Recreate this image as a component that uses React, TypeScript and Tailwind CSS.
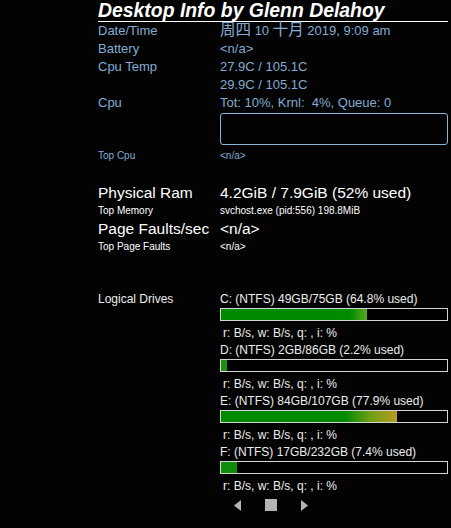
const blue = "text-[#82acd2]";

type Drive = {
  title: string;
  pct: number;
  grad: string;
};

const drives: Drive[] = [
  { title: "C: (NTFS) 49GB/75GB (64.8% used)", pct: 64.8, grad: "linear-gradient(to right, #008a00 0%, #008a00 88%, #5aa81c 100%)" },
  { title: "D: (NTFS) 2GB/86GB (2.2% used)", pct: 2.6, grad: "#1f8f12" },
  { title: "E: (NTFS) 84GB/107GB (77.9% used)", pct: 77.9, grad: "linear-gradient(to right, #008a00 0%, #008a00 70%, #6fa016 85%, #b89a22 100%)" },
  { title: "F: (NTFS) 17GB/232GB (7.4% used)", pct: 7.2, grad: "#0f8c0a" },
];

function Row({ label, children, className = "" }: { label: string; children?: React.ReactNode; className?: string }) {
  return (
    <div className={`grid grid-cols-[122px_1fr] ${className}`}>
      <div className="whitespace-nowrap">{label}</div>
      <div className="whitespace-pre">{children}</div>
    </div>
  );
}

function DriveBlock({ d }: { d: Drive }) {
  return (
    <div>
      <div className="h-[17px] leading-[17px] whitespace-nowrap">{d.title}</div>
      <div className="h-[13px] w-[228px] border border-[#d4d4d4] bg-black">
        <div className="h-full" style={{ width: `${d.pct}%`, background: d.grad }} />
      </div>
      <div className="pt-[4px] h-[21px] leading-[17px] pl-[3px] whitespace-pre">r: B/s, w: B/s, q: , i: %</div>
    </div>
  );
}

export default function App() {
  return (
    <div className="w-[451px] h-[528px] overflow-hidden bg-[#030303] pl-[98px] pr-[3px] font-['Liberation_Sans',Arial,'Noto_Sans_CJK_SC',sans-serif] text-[#ececec]">
      <div className="h-[22px] border-b border-white text-[19.4px] leading-[21px] font-bold italic text-white whitespace-nowrap">
        Desktop Info by Glenn Delahoy
      </div>

      <div className={`text-[13px] leading-[18px] ${blue}`}>
        <Row label="Date/Time" className="h-[18px]">
          <span className="text-[15.5px] leading-[0]">周四</span> 10 <span className="text-[15.5px] leading-[0]">十月</span> 2019, 9:09 am
        </Row>
        <Row label="Battery">{"<n/a>"}</Row>
        <Row label="Cpu Temp">27.9C / 105.1C</Row>
        <Row label="">29.9C / 105.1C</Row>
        <Row label="Cpu">Tot: 10%, Krnl:  4%, Queue: 0</Row>
      </div>

      <div className="ml-[122px] mt-[1px] h-[32px] w-[228px] rounded-[3px] border-[1.5px] border-[#8cb6d8]" />

      <Row label="Top Cpu" className={`mt-[4px] text-[10px] leading-[14px] ${blue}`}>
        {"<n/a>"}
      </Row>

      <Row label="Physical Ram" className="mt-[19px] text-[15.5px] leading-[21px] text-white">
        4.2GiB / 7.9GiB (52% used)
      </Row>
      <Row label="Top Memory" className="mt-[1px] text-[10px] leading-[14px] text-white">
        svchost.exe (pid:556) 198.8MiB
      </Row>
      <Row label="Page Faults/sec" className="text-[15.5px] leading-[21px] text-white">
        {"<n/a>"}
      </Row>
      <Row label="Top Page Faults" className="mt-[1px] text-[10px] leading-[14px] text-white">
        {"<n/a>"}
      </Row>

      <div className="mt-[37px] grid grid-cols-[122px_1fr] text-[12px] text-[#ececec]">
        <div className="h-[17px] leading-[17px]">Logical Drives</div>
        <div>
          {drives.map((d) => (
            <DriveBlock key={d.title} d={d} />
          ))}
          <div className="mt-[4px] ml-[14px] flex items-center">
            <svg width="7" height="11" viewBox="0 0 7 11" className="mt-[1px]">
              <polygon points="7,0 7,11 0,5.5" fill="#b4b4b4" />
            </svg>
            <div className="ml-[24px] h-[12px] w-[12px] bg-[#b4b4b4]" />
            <svg width="7" height="11" viewBox="0 0 7 11" className="ml-[24px] mt-[1px]">
              <polygon points="0,0 0,11 7,5.5" fill="#b4b4b4" />
            </svg>
          </div>
        </div>
      </div>
    </div>
  );
}
